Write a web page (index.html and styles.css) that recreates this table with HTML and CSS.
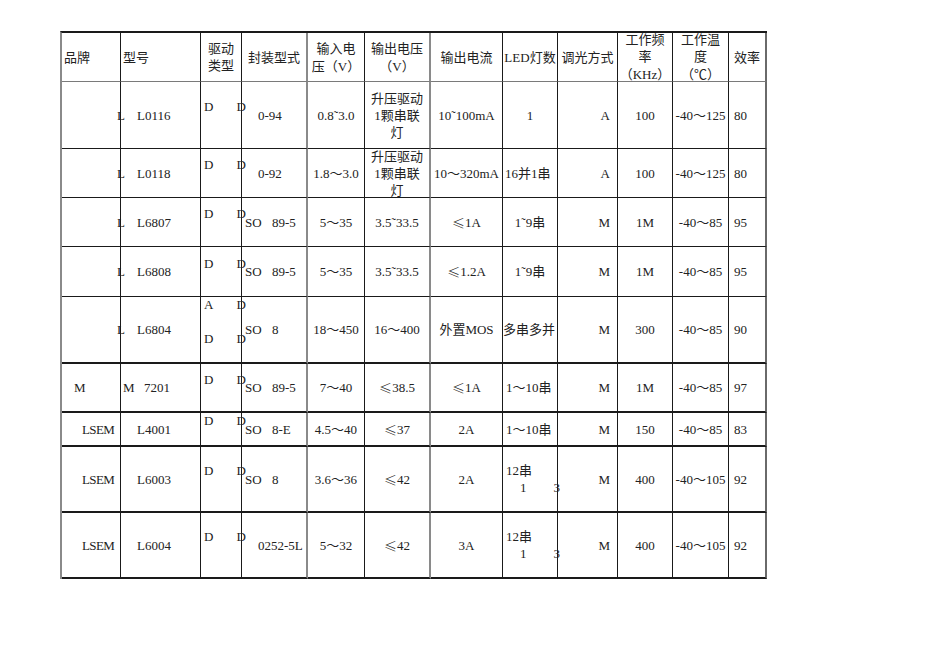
FILE: index.html
```html
<!DOCTYPE html>
<html lang="zh">
<head>
<meta charset="utf-8">
<title>LED驱动IC对比表</title>
<link rel="stylesheet" href="styles.css">
</head>
<body>
<div class="sheet">
  <div class="row head">
    <div class="c l p2">品牌</div>
    <div class="c l p2">型号</div>
    <div class="c m"><div>驱动<br>类型</div></div>
    <div class="c m"><div>封装型式</div></div>
    <div class="c m"><div>输入电<br>压<span class="po">（</span>V<span class="pc">）</span></div></div>
    <div class="c m"><div>输出电压<br><span class="po">（</span>V<span class="pc">）</span></div></div>
    <div class="c m"><div>输出电流</div></div>
    <div class="c m"><div>LED灯数</div></div>
    <div class="c m"><div>调光方式</div></div>
    <div class="c m"><div>工作频<br>率<br><span class="po">（</span>KHz<span class="pc">）</span></div></div>
    <div class="c m"><div>工作温<br>度<br><span class="po">（</span>℃<span class="pc">）</span></div></div>
    <div class="c m"><div>效率</div></div>
  </div>

  <div class="row">
    <div class="c"></div>
    <div class="c l"><span class="pre">L</span><span class="code">L0116</span></div>
    <div class="c drvc"><div class="drv"><div class="dl"><span>D</span><span>D</span></div><div class="dl"></div></div></div>
    <div class="c l p16">0-94</div>
    <div class="c m">0.8˜3.0</div>
    <div class="c m"><div>升压驱动<br>1颗串联<br>灯</div></div>
    <div class="c m">10˜100mA</div>
    <div class="c m">1</div>
    <div class="c r">A</div>
    <div class="c m">100</div>
    <div class="c m">-40～125</div>
    <div class="c l p5">80</div>
  </div>

  <div class="row">
    <div class="c"></div>
    <div class="c l"><span class="pre">L</span><span class="code">L0118</span></div>
    <div class="c drvc"><div class="drv"><div class="dl"><span>D</span><span>D</span></div><div class="dl"></div></div></div>
    <div class="c l p16">0-92</div>
    <div class="c m">1.8～3.0</div>
    <div class="c m"><div>升压驱动<br>1颗串联<br>灯</div></div>
    <div class="c m">10～320mA</div>
    <div class="c l p2">16并1串</div>
    <div class="c r">A</div>
    <div class="c m">100</div>
    <div class="c m">-40～125</div>
    <div class="c l p5">80</div>
  </div>

  <div class="row">
    <div class="c"></div>
    <div class="c l"><span class="pre">L</span><span class="code">L6807</span></div>
    <div class="c drvc"><div class="drv"><div class="dl"><span>D</span><span>D</span></div><div class="dl"></div></div></div>
    <div class="c l p3"><span class="so">SO</span>89-5</div>
    <div class="c m">5～35</div>
    <div class="c m">3.5˜33.5</div>
    <div class="c m"><span class="cj">≤</span>1A</div>
    <div class="c m">1˜9串</div>
    <div class="c r">M</div>
    <div class="c m">1M</div>
    <div class="c m">-40～85</div>
    <div class="c l p5">95</div>
  </div>

  <div class="row">
    <div class="c"></div>
    <div class="c l"><span class="pre">L</span><span class="code">L6808</span></div>
    <div class="c drvc"><div class="drv"><div class="dl"><span>D</span><span>D</span></div><div class="dl"></div></div></div>
    <div class="c l p3"><span class="so">SO</span>89-5</div>
    <div class="c m">5～35</div>
    <div class="c m">3.5˜33.5</div>
    <div class="c m"><span class="cj">≤</span>1.2A</div>
    <div class="c m">1˜9串</div>
    <div class="c r">M</div>
    <div class="c m">1M</div>
    <div class="c m">-40～85</div>
    <div class="c l p5">95</div>
  </div>

  <div class="row thick">
    <div class="c"></div>
    <div class="c l"><span class="pre">L</span><span class="code">L6804</span></div>
    <div class="c drvc"><div class="drv"><div class="dl"><span>A</span><span>D</span></div><div class="dl"></div><div class="dl"><span>D</span><span>D</span></div><div class="dl"></div></div></div>
    <div class="c l p3"><span class="so">SO</span>8</div>
    <div class="c m">18～450</div>
    <div class="c m">16～400</div>
    <div class="c m">外置MOS</div>
    <div class="c l">多串多并</div>
    <div class="c r">M</div>
    <div class="c m">300</div>
    <div class="c m">-40～85</div>
    <div class="c l p5">90</div>
  </div>

  <div class="row thick">
    <div class="c l p12">M</div>
    <div class="c l p2"><span class="mm">M</span>7201</div>
    <div class="c drvc"><div class="drv"><div class="dl"><span>D</span><span>D</span></div><div class="dl"></div></div></div>
    <div class="c l p3"><span class="so">SO</span>89-5</div>
    <div class="c m">7～40</div>
    <div class="c m"><span class="cj">≤</span>38.5</div>
    <div class="c m"><span class="cj">≤</span>1A</div>
    <div class="c l p3">1～10串</div>
    <div class="c r">M</div>
    <div class="c m">1M</div>
    <div class="c m">-40～85</div>
    <div class="c l p5">97</div>
  </div>

  <div class="row thick">
    <div class="c l brand">LSEM</div>
    <div class="c l p16">L4001</div>
    <div class="c drvc"><div class="drv"><div class="dl"><span>D</span><span>D</span></div><div class="dl"></div></div></div>
    <div class="c l p3"><span class="so">SO</span>8-E</div>
    <div class="c m">4.5～40</div>
    <div class="c m"><span class="cj">≤</span>37</div>
    <div class="c m">2A</div>
    <div class="c l p3">1～10串</div>
    <div class="c r">M</div>
    <div class="c m">150</div>
    <div class="c m">-40～85</div>
    <div class="c l p5">83</div>
  </div>

  <div class="row thick">
    <div class="c l brand">LSEM</div>
    <div class="c l p16">L6003</div>
    <div class="c drvc"><div class="drv"><div class="dl"><span>D</span><span>D</span></div><div class="dl"></div></div></div>
    <div class="c l p3"><span class="so">SO</span>8</div>
    <div class="c m">3.6～36</div>
    <div class="c m"><span class="cj">≤</span>42</div>
    <div class="c m">2A</div>
    <div class="c l p3"><div class="led"><div>12串</div><div class="ll"><span>1</span><span>3</span></div></div></div>
    <div class="c r">M</div>
    <div class="c m">400</div>
    <div class="c m">-40～105</div>
    <div class="c l p5">92</div>
  </div>

  <div class="row thick">
    <div class="c l brand">LSEM</div>
    <div class="c l p16">L6004</div>
    <div class="c drvc"><div class="drv"><div class="dl"><span>D</span><span>D</span></div><div class="dl"></div></div></div>
    <div class="c l p16">0252-5L</div>
    <div class="c m">5～32</div>
    <div class="c m"><span class="cj">≤</span>42</div>
    <div class="c m">3A</div>
    <div class="c l p3"><div class="led"><div>12串</div><div class="ll"><span>1</span><span>3</span></div></div></div>
    <div class="c r">M</div>
    <div class="c m">400</div>
    <div class="c m">-40～105</div>
    <div class="c l p5">92</div>
  </div>
</div>
</body>
</html>
```

FILE: styles.css
```css
html, body {
  margin: 0;
  padding: 0;
  background: #ffffff;
}

body {
  font-family: "Liberation Serif", "Noto Sans CJK SC", serif;
  font-size: 13px;
  line-height: 17px;
  color: #222222;
}

.sheet {
  display: grid;
  grid-template-columns: 59px 80px 41px 66px 57px 66px 72px 55px 60px 55px 56px 38px;
  grid-template-rows: 49px 67px 49px 49px 50px 67px 49px 34px 66px 66px;
  width: max-content;
  margin: 31px 0 0 60px;
  border-top: 2px solid #1a1a1a;
  border-left: 2px solid #8a8a8a;
}

.row {
  display: contents;
}

.c {
  box-sizing: border-box;
  display: flex;
  align-items: center;
  white-space: nowrap;
  min-width: 0;
  border-right: 1px solid #1a1a1a;
  border-bottom: 1px solid #1a1a1a;
}

.row > .c:nth-child(4),
.row > .c:nth-child(6) {
  border-right: 2px solid #8a8a8a;
}

.row > .c:nth-child(12) {
  border-right: 2px solid #6a6a6a;
}

.head > .c {
  border-bottom-color: #7a7a7a;
}

.thick > .c {
  border-bottom: 2px solid #1a1a1a;
}

.l { justify-content: flex-start; }
.r { justify-content: flex-end; padding-right: 7px; }
.m { justify-content: center; text-align: center; }

.p2 { padding-left: 2px; }
.p3 { padding-left: 3px; }
.p5 { padding-left: 5px; }
.p12 { padding-left: 12px; }
.p16 { padding-left: 16px; }

.brand {
  padding-left: 20px;
  letter-spacing: -0.6px;
}

.cj {
  font-family: "Noto Sans CJK SC", sans-serif;
  font-weight: 300;
}

.po,
.pc {
  display: inline-block;
  width: 13px;
  font-family: "Noto Sans CJK SC", sans-serif;
}

.po { text-align: right; }
.pc { text-align: left; }

.pre {
  margin-left: -4px;
  width: 20px;
  display: inline-block;
}

.mm {
  display: inline-block;
  width: 21px;
}

.so {
  display: inline-block;
  width: 27px;
}

.drvc {
  padding-left: 3px;
}

.drv {
  flex: none;
  width: calc(100% + 5px);
}

.dl {
  display: flex;
  justify-content: space-between;
  height: 17px;
}

.led {
  flex: none;
  width: calc(100% + 3px);
}

.ll {
  display: flex;
  justify-content: space-between;
  padding-left: 14px;
}
```
